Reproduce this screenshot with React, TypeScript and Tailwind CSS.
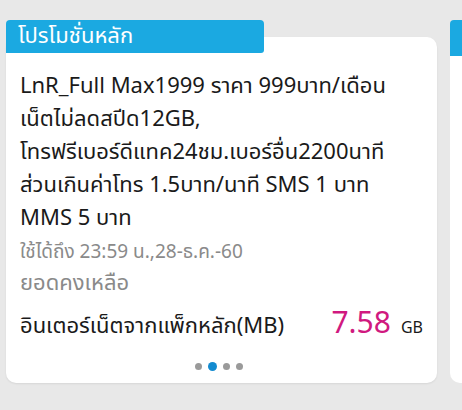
export default function App() {
  const font = { fontFamily: '"Noto Sans Thai", "Noto Sans", "DejaVu Sans", sans-serif' }
  return (
    <div className="h-[410px] w-[462px] overflow-hidden bg-[#e8e8e8]" style={font}>
      <div className="flex gap-[13px] pl-[6px] pt-[20px]">
        {/* การ์ดโปรหลัก */}
        <div className="flex w-[431px] shrink-0 flex-col">
          <div className="relative z-10 flex h-[33px] w-[258px] items-center rounded-t-[4px] rounded-br-[3px] bg-[#1ba9e1] pl-[12px]">
            <span className="text-[22px] leading-none text-white">โปรโมชั่นหลัก</span>
          </div>
          <div className="-mt-[16px] h-[346px] rounded-[10px] bg-white px-[14px] pt-[33px] shadow-[0_1px_2px_rgba(0,0,0,0.08)]">
            <p className="text-[22px] leading-[33px] text-[#1a1a1a]">
              LnR_Full Max1999 ราคา 999บาท/เดือน
              <br />
              เน็ตไม่ลดสปีด12GB,
              <br />
              โทรฟรีเบอร์ดีแทค24ชม.เบอร์อื่น2200นาที
              <br />
              ส่วนเกินค่าโทร 1.5บาท/นาที SMS 1 บาท
              <br />
              MMS 5 บาท
            </p>
            <p className="mt-[3px] text-[19px] leading-[29px] text-[#8a8a8a]">ใช้ได้ถึง 23:59 น.,28-ธ.ค.-60</p>
            <p className="text-[22px] leading-[33px] text-[#8a8a8a]">ยอดคงเหลือ</p>
            <div className="mt-[9px] flex items-baseline justify-between">
              <span className="text-[22px] text-[#1a1a1a]">อินเตอร์เน็ตจากแพ็กหลัก(MB)</span>
              <span className="flex items-baseline">
                <span className="text-[30px] leading-none text-[#d0197f]">7.58</span>
                <span className="ml-[10px] text-[16px] text-[#1a1a1a]">GB</span>
              </span>
            </div>
            <div className="mt-[19px] flex items-center justify-center gap-[6px] pr-[6px]">
              <span className="h-[7px] w-[7px] rounded-full bg-[#9a9a9a]" />
              <span className="h-[9px] w-[9px] rounded-full bg-[#138bd0]" />
              <span className="h-[7px] w-[7px] rounded-full bg-[#9a9a9a]" />
              <span className="h-[7px] w-[7px] rounded-full bg-[#9a9a9a]" />
            </div>
          </div>
        </div>

        {/* การ์ดถัดไป */}
        <div className="flex w-[431px] shrink-0 flex-col">
          <div className="relative z-10 h-[36px] w-[258px] rounded-t-[4px] rounded-br-[3px] bg-[#1ba9e1]" />
          <div className="-mt-[19px] h-[346px] rounded-[10px] bg-white" />
        </div>
      </div>
    </div>
  )
}
